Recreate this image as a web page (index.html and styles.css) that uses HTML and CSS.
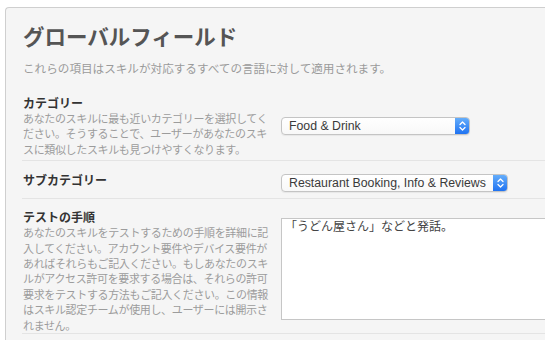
FILE: index.html
```html
<!DOCTYPE html>
<html lang="ja">
<head>
    <meta charset="UTF-8">
    <meta name="viewport" content="width=device-width, initial-scale=1.0">
    <title>グローバルフィールド</title>
    <link rel="stylesheet" href="styles.css">
</head>
<body>

    <!-- Painel -->
    <div class="panel">
        <h1 class="panel-title">グローバルフィールド</h1>
        <p class="panel-lead">これらの項目はスキルが対応するすべての言語に対して適用されます。</p>

        <!-- Categoria -->
        <div class="field field-category">
            <div class="field-info">
                <h2 class="field-label">カテゴリー</h2>
                <p class="field-help">あなたのスキルに最も近いカテゴリーを選択してください。そうすることで、ユーザーがあなたのスキスに類似したスキルも見つけやすくなります。</p>
            </div>
            <div class="select select-short">
                <span class="select-value">Food &amp; Drink</span>
                <span class="select-arrows">
                    <svg width="15" height="18" viewBox="0 0 15 18">
                        <path d="M5 7.5 L7.5 5 L10 7.5 M5 10.5 L7.5 13 L10 10.5" fill="none" stroke="#fff" stroke-width="1.3" stroke-linecap="round" stroke-linejoin="round"/>
                    </svg>
                </span>
            </div>
        </div>

        <!-- Subcategoria -->
        <div class="field field-sub">
            <div class="field-info">
                <h2 class="field-label">サブカテゴリー</h2>
            </div>
            <div class="select select-long">
                <span class="select-value">Restaurant Booking, Info &amp; Reviews</span>
                <span class="select-arrows">
                    <svg width="15" height="18" viewBox="0 0 15 18">
                        <path d="M5 7.5 L7.5 5 L10 7.5 M5 10.5 L7.5 13 L10 10.5" fill="none" stroke="#fff" stroke-width="1.3" stroke-linecap="round" stroke-linejoin="round"/>
                    </svg>
                </span>
            </div>
        </div>

        <!-- Instruções de teste -->
        <div class="field field-test">
            <div class="field-info">
                <h2 class="field-label">テストの手順</h2>
                <p class="field-help">あなたのスキルをテストするための手順を詳細に記入してください。アカウント要件やデバイス要件があればそれらもご記入ください。もしあなたのスキルがアクセス許可を要求する場合は、それらの許可要求をテストする方法もご記入ください。この情報はスキル認定チームが使用し、ユーザーには開示されません。</p>
            </div>
            <div class="textbox">「うどん屋さん」などと発話。</div>
        </div>
    </div>

</body>
</html>
```

FILE: styles.css
```css
* {
    margin: 0;
    padding: 0;
    box-sizing: border-box;
    font-family: "Noto Sans CJK JP", "Liberation Sans", sans-serif;
}

body {
    background-color: #fff;
    overflow: hidden;
    width: 545px;
    height: 340px;
}

/* Painel (corta nas bordas direita e inferior) */
.panel {
    margin: 7px 0 0 5px;
    width: 540px;
    height: 333px;
    overflow: hidden;
    background-color: #f5f5f5;
    border: 1px solid #cfcfcf;
    border-right: none;
    border-bottom: none;
    border-radius: 4px 0 0 0;
    padding: 14px 0 0 16px;
}

.panel-title {
    font-size: 21.5px;
    line-height: 28px;
    font-weight: 700;
    color: #555;
    padding-left: 1px;
}

.panel-lead {
    margin-top: 10px;
    margin-bottom: 8px;
    font-size: 11.6px;
    line-height: 16px;
    color: #9a9a9a;
    padding-left: 1px;
}

/* Campos */
.field {
    display: flex;
    align-items: flex-start;
    border-bottom: 1px solid #e4e4e4;
}

.field-info {
    width: 259px;
    flex-shrink: 0;
    padding-left: 1px;
}

.field-label {
    font-size: 12px;
    line-height: 16px;
    font-weight: 700;
    color: #333;
}

.field-help {
    width: 248px;
    font-size: 11px;
    letter-spacing: -0.35px;
    line-height: 15.4px;
    color: #9c9c9c;
}

.field-category {
    padding: 11px 0 3px;
}

.field-category .select {
    margin-top: 22px;
}

.field-sub {
    padding: 11px 0 6px;
}

.field-sub .select {
    margin-top: 2px;
}

.field-test {
    padding: 10px 0 0;
}

/* Select estilo mac */
.select {
    display: flex;
    height: 18px;
    background: linear-gradient(#ffffff, #f8f8f8);
    border: 1px solid #c4c4c4;
    border-radius: 4px;
    box-shadow: 0 1px 1px rgba(0, 0, 0, 0.06);
    overflow: hidden;
}

.select-short {
    width: 189px;
}

.select-long {
    width: 227px;
}

.select-value {
    flex: 1;
    font-family: "Liberation Sans", Arial, sans-serif;
    font-size: 12.3px;
    line-height: 16px;
    color: #3a3a3a;
    padding-left: 7px;
    white-space: nowrap;
    overflow: hidden;
}

.select-arrows {
    display: flex;
    flex-shrink: 0;
    width: 15px;
    margin: -1px -1px -1px 0;
    height: 18px;
    background: linear-gradient(#69b1fb, #1b6ff1);
    border-radius: 0 4px 4px 0;
}

/* Caixa de texto */
.textbox {
    margin-top: 9px;
    width: 264px;
    height: 102px;
    background-color: #fff;
    border: 1px solid #c6c6c6;
    border-right: none;
    padding: 0 3px;
    font-size: 12px;
    line-height: 14px;
    color: #444;
}
```
